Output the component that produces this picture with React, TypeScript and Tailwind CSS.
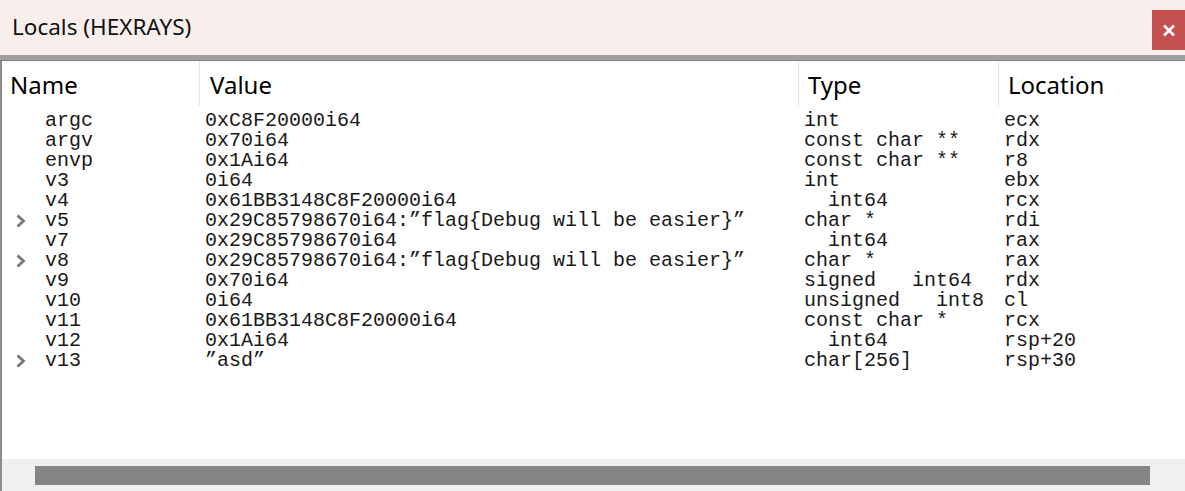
import React from 'react';

type Row = { name: string; value: string; type: string; loc: string; expand?: boolean };

const rows: Row[] = [
  { name: 'argc', value: '0xC8F20000i64', type: 'int', loc: 'ecx' },
  { name: 'argv', value: '0x70i64', type: 'const char **', loc: 'rdx' },
  { name: 'envp', value: '0x1Ai64', type: 'const char **', loc: 'r8' },
  { name: 'v3', value: '0i64', type: 'int', loc: 'ebx' },
  { name: 'v4', value: '0x61BB3148C8F20000i64', type: '  int64', loc: 'rcx' },
  { name: 'v5', value: '0x29C85798670i64:\u201dflag{Debug will be easier}\u201d', type: 'char *', loc: 'rdi', expand: true },
  { name: 'v7', value: '0x29C85798670i64', type: '  int64', loc: 'rax' },
  { name: 'v8', value: '0x29C85798670i64:\u201dflag{Debug will be easier}\u201d', type: 'char *', loc: 'rax', expand: true },
  { name: 'v9', value: '0x70i64', type: 'signed   int64', loc: 'rdx' },
  { name: 'v10', value: '0i64', type: 'unsigned   int8', loc: 'cl' },
  { name: 'v11', value: '0x61BB3148C8F20000i64', type: 'const char *', loc: 'rcx' },
  { name: 'v12', value: '0x1Ai64', type: '  int64', loc: 'rsp+20' },
  { name: 'v13', value: '\u201dasd\u201d', type: 'char[256]', loc: 'rsp+30', expand: true },
];

// expand arrow for struct / pointer rows
const Chevron = () => (
  <svg width="12" height="16" viewBox="0 0 12 16" className="block">
    <path d="M2.5 2.5 L8.5 8 L2.5 13.5" fill="none" stroke="#777" strokeWidth="2.8" />
  </svg>
);

export default function App() {
  return (
    <div className="w-[1185px] h-[491px] flex flex-col bg-white overflow-hidden">
      {/* title bar */}
      <div className="h-[55px] shrink-0 bg-[#f8efec] flex items-start justify-between">
        <div className="pl-[12px] pt-[12px] text-[22.5px] leading-[30px] text-[#111] font-['Noto_Sans',sans-serif]">
          Locals (HEXRAYS)
        </div>
        <div className="mt-[10px] w-[33px] h-[40px] bg-[#c55050] flex items-center justify-center text-white">
          <svg width="14" height="13" viewBox="0 0 14 13">
            <path d="M2 1.5 L12 11.5 M12 1.5 L2 11.5" stroke="#fff" strokeWidth="2.6" />
          </svg>
        </div>
      </div>
      <div className="h-[5px] shrink-0 bg-[#a0a0a0]" />
      <div className="h-px shrink-0 bg-[#7f7f7f]" />

      <div className="flex-1 flex flex-col border-l-2 border-[#8c8c8c]">
        {/* column headers */}
        <div className="h-[45px] shrink-0 flex text-[24px] text-black font-['Noto_Sans',sans-serif] leading-[45px]">
          <div className="w-[198px] pl-[8px] pt-[1px] border-r border-[#e4e4e4]">Name</div>
          <div className="w-[599px] pl-[10px] pt-[1px] border-r border-[#e4e4e4]">Value</div>
          <div className="w-[200px] pl-[9px] pt-[1px] border-r border-[#e4e4e4]">Type</div>
          <div className="flex-1 pl-[9px] pt-[1px]">Location</div>
        </div>

        {/* rows */}
        <div className="flex-1 pt-[5px] font-['Liberation_Mono',monospace] text-[20px] text-[#1a1a1a]">
          {rows.map((r) => (
            <div key={r.name} className="h-[20px] leading-[20px] flex overflow-hidden whitespace-pre">
              <div className="w-[43px] flex items-center pl-[13px]">{r.expand ? <Chevron /> : null}</div>
              <div className="w-[160px]">{r.name}</div>
              <div className="w-[599px]">{r.value}</div>
              <div className="w-[200px]">{r.type}</div>
              <div className="flex-1">{r.loc}</div>
            </div>
          ))}
        </div>

        {/* horizontal scrollbar */}
        <div className="h-[32px] shrink-0 bg-[#f0f0f0] flex items-center pl-[33px] pr-[35px]">
          <div className="h-[19px] flex-1 bg-[#858585]" />
        </div>
      </div>
    </div>
  );
}
